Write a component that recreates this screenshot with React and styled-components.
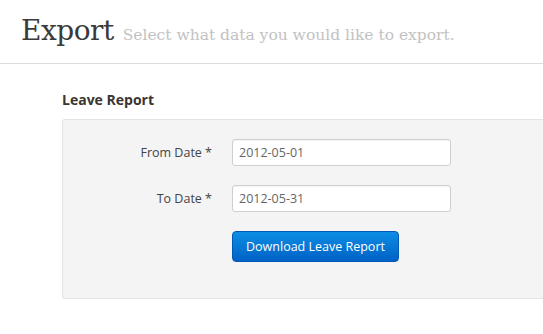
import React from 'react';
import styled, { createGlobalStyle } from 'styled-components';

const GlobalStyle = createGlobalStyle`
  html, body {
    margin: 0;
    padding: 0;
    background: #fff;
  }
  body {
    font-family: "Open Sans", "Liberation Sans", sans-serif;
    color: #333;
  }
`;

const Header = styled.div`
  display: flex;
  align-items: baseline;
  gap: 9px;
  padding: 14px 21px 0;
  height: 49px;
  border-bottom: 1px solid #dcdcdc;
`;

const Title = styled.h1`
  margin: 0;
  font-family: "DejaVu Serif", "Liberation Serif", serif;
  font-weight: normal;
  font-size: 28px;
  letter-spacing: -0.5px;
  color: #3a3a3a;
`;

const Subtitle = styled.span`
  font-family: "DejaVu Serif", "Liberation Serif", serif;
  font-size: 15.5px;
  color: #c2c2c2;
`;

const Content = styled.div`
  padding: 27px 0 0 62px;
`;

const SectionTitle = styled.h2`
  margin: 0 0 10px;
  font-size: 14px;
  font-weight: bold;
  color: #3b3530;
  line-height: 18px;
`;

const Panel = styled.div`
  box-sizing: border-box;
  background: #f4f4f4;
  border: 1px solid #e4e4e4;
  border-right: none;
  border-radius: 3px 0 0 3px;
  padding: 19px 0 36px;
  display: grid;
  grid-template-columns: 149px 219px;
  column-gap: 20px;
  row-gap: 19px;
  align-items: center;
`;

const Label = styled.label`
  text-align: right;
  font-size: 12.5px;
  color: #444;
`;

const Input = styled.input`
  box-sizing: border-box;
  height: 27px;
  width: 100%;
  padding: 0 6px;
  border: 1px solid #cfcfcf;
  border-radius: 3px;
  background: #fff;
  font-family: "Open Sans", "Liberation Sans", sans-serif;
  font-size: 12.5px;
  color: #666;
  box-shadow: inset 0 1px 1px rgba(0, 0, 0, 0.05);
`;

const Button = styled.button`
  grid-column: 2;
  justify-self: start;
  height: 31px;
  width: 167px;
  border: 1px solid #0058b4;
  border-radius: 4px;
  background: linear-gradient(#0c8de3, #0062c6);
  color: #fff;
  font-family: "Open Sans", "Liberation Sans", sans-serif;
  font-size: 12.5px;
  padding: 0;
`;

function Row({ label, value }) {
  return (
    <>
      <Label>{label}</Label>
      <Input defaultValue={value} />
    </>
  );
}

export default function App() {
  return (
    <>
      <GlobalStyle />
      <Header>
        <Title>Export</Title>
        <Subtitle>Select what data you would like to export.</Subtitle>
      </Header>
      <Content>
        <SectionTitle>Leave Report</SectionTitle>
        <Panel>
          <Row label="From Date *" value="2012-05-01" />
          <Row label="To Date *" value="2012-05-31" />
          <Button>Download Leave Report</Button>
        </Panel>
      </Content>
    </>
  );
}
